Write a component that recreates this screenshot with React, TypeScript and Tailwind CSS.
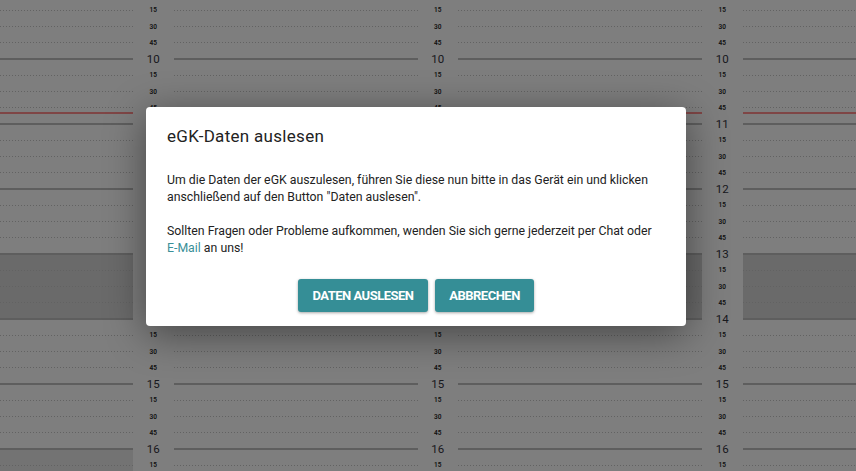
import React from 'react';

const START_HOUR = 9;
const END_HOUR = 17;
const QUARTERS = ['00', '15', '30', '45'];

type Slot = { hour: number; quarter: number };

const slots: Slot[] = [];
for (let h = START_HOUR; h < END_HOUR; h++) {
  for (let q = 0; q < 4; q++) slots.push({ hour: h, quarter: q });
}

// labels that fall inside the visible window (9:15 - 16:15)
const labelSlots = slots.filter(
  (s) => !(s.hour === START_HOUR && s.quarter === 0) && (s.hour < 16 || s.quarter <= 1)
);

/** One day column: quarter slots with lines on top, break shaded darker */
function DayColumn({ index }: { index: number }) {
  return (
    <div className="relative w-[244px] shrink-0 mt-[-6.7px]">
      {slots.map((s) => {
        const isBreak = s.hour === 13;
        const isLate = index === 0 && s.hour >= 16;
        return (
          <div
            key={`${s.hour}-${s.quarter}`}
            className={`h-[16.25px] flex flex-col ${
              isBreak ? 'bg-[#d5d5d5]' : isLate ? 'bg-[#e6e6e6]' : ''
            }`}
          >
            {s.quarter === 0 ? (
              <div className="h-[2px] bg-[#bcbcbc]" />
            ) : (
              <div className="h-px bg-[linear-gradient(to_right,#c4c4c4_1px,transparent_1px)] bg-[length:3px_1px]" />
            )}
          </div>
        );
      })}
      {/* current time indicator */}
      <div className="absolute left-0 right-0 top-[118.7px] h-[2px] bg-[#ff8c8c]" />
    </div>
  );
}

/** Time scale between day columns */
function TimeColumn() {
  return (
    <div className="w-[40.5px] shrink-0 pt-[2.45px]">
      {labelSlots.map((s) => (
        <div
          key={`${s.hour}-${s.quarter}`}
          className="h-[16.25px] flex items-center justify-center"
        >
          {s.quarter === 0 ? (
            <span className="text-[11.5px] leading-none text-[#33333d]">{s.hour}</span>
          ) : (
            <span className="text-[6.5px] leading-none font-semibold text-[#222]">
              {QUARTERS[s.quarter]}
            </span>
          )}
        </div>
      ))}
    </div>
  );
}

export default function App() {
  return (
    <div
      className="relative h-screen w-full overflow-hidden bg-[#fcfcfc]"
      style={{ fontFamily: 'Roboto, "Noto Sans", sans-serif' }}
    >
      {/* Calendar background */}
      <div className="flex items-start ml-[-111px]">
        <DayColumn index={0} />
        <TimeColumn />
        <DayColumn index={1} />
        <TimeColumn />
        <DayColumn index={2} />
        <TimeColumn />
        <DayColumn index={3} />
      </div>

      {/* Backdrop */}
      <div className="absolute inset-0 bg-black/50" />

      {/* Dialog */}
      <div className="absolute left-[146px] top-[107px] w-[540px] bg-white rounded-[4px] shadow-[0_8px_40px_rgba(0,0,0,0.45)] px-[21px] pt-[17px] pb-[14px] text-[#222]">
        <h2 className="text-[17px] leading-[24px] font-normal tracking-[0.3px]">
          eGK-Daten auslesen
        </h2>
        <div className="mt-[24px] text-[12.3px] leading-[17px] text-[#222]">
          <p className="whitespace-nowrap">
            Um die Daten der eGK auszulesen, führen Sie diese nun bitte in das Gerät ein und klicken
            <br />
            anschließend auf den Button "Daten auslesen".
          </p>
          <p className="mt-[17px] whitespace-nowrap">
            Sollten Fragen oder Probleme aufkommen, wenden Sie sich gerne jederzeit per Chat oder
            <br />
            <a className="text-[#3a9098]">E-Mail</a> an uns!
          </p>
        </div>
        <div className="mt-[22px] flex justify-center gap-[7px]">
          <button className="h-[33px] w-[130px] rounded-[3px] bg-[#358e96] text-white text-[13px] font-bold tracking-[-0.5px] shadow-[0_1px_3px_rgba(0,0,0,0.35)]">
            DATEN AUSLESEN
          </button>
          <button className="h-[33px] w-[99px] rounded-[3px] bg-[#358e96] text-white text-[13px] font-bold tracking-[-0.5px] shadow-[0_1px_3px_rgba(0,0,0,0.35)]">
            ABBRECHEN
          </button>
        </div>
      </div>
    </div>
  );
}
